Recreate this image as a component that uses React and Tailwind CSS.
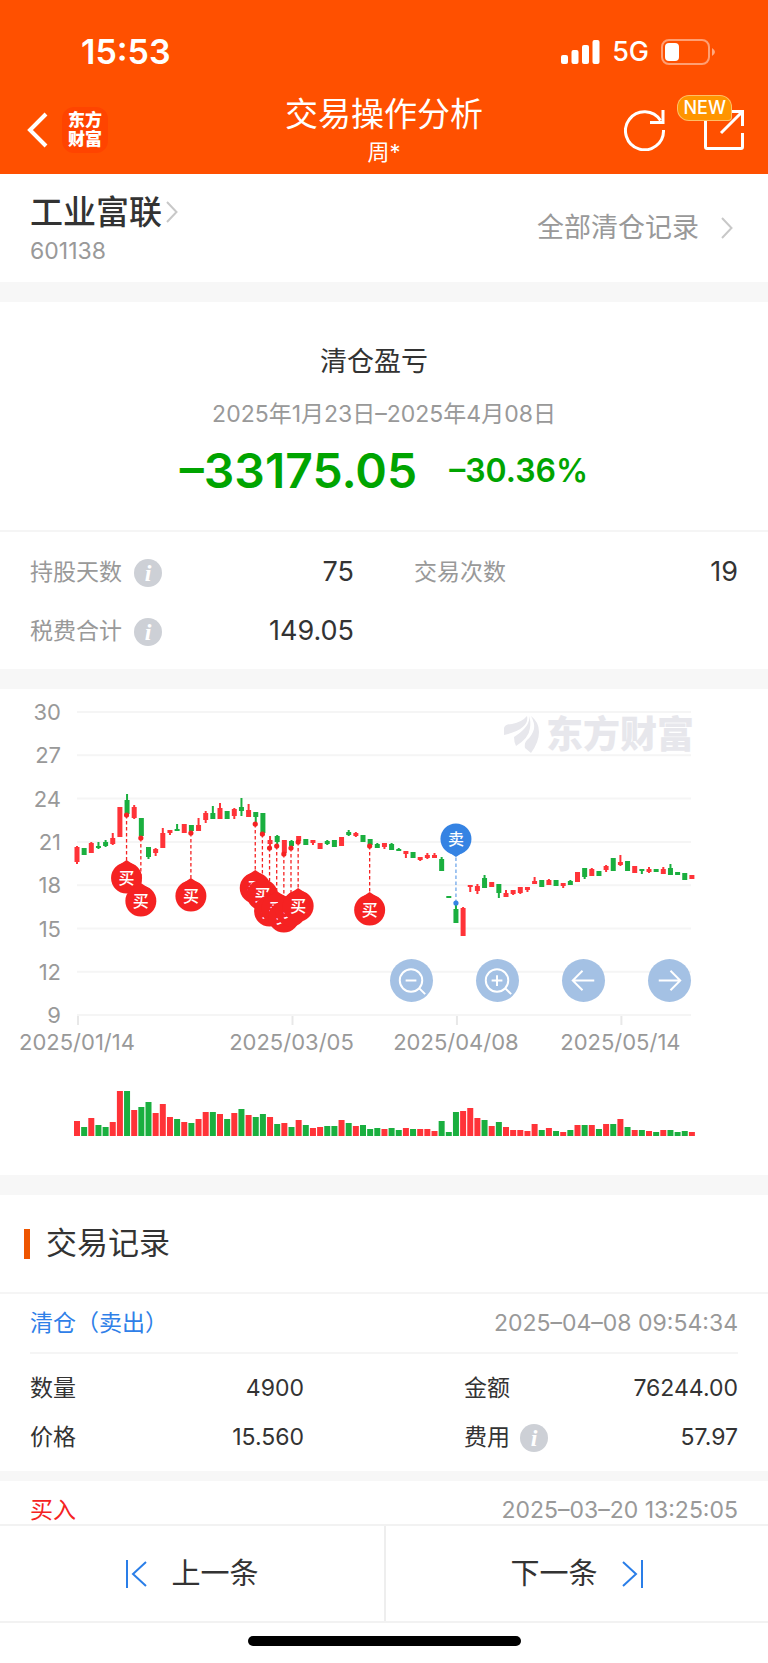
import clsx from 'clsx'

const RED = '#ff3338'
const GREEN = '#1aaf3f'

// first candle centre and the distance between two candles
const X0 = 77
const STEP = 7.15

// [rising, high, top, bottom, low, volume]
const candles = [
  [1, 157, 158, 173, 175, 15], [0, 159, 159, 166, 166, 9], [1, 153, 154, 164, 164, 18], [0, 153, 157, 159, 160, 11],
  [0, 151, 153, 157, 158, 9], [1, 144, 149, 155, 156, 14], [1, 118, 118, 148, 148, 45], [0, 105, 111, 125, 125, 45],
  [1, 116, 118, 129, 130, 26], [0, 129, 129, 147, 147, 29], [0, 158, 158, 168, 170, 34], [1, 159, 160, 164, 167, 23],
  [1, 139, 144, 159, 159, 32], [1, 141, 141, 144, 146, 19], [0, 135, 140, 142, 142, 17], [1, 135, 135, 144, 144, 14],
  [0, 136, 136, 142, 143, 13], [1, 129, 136, 142, 142, 17], [1, 122, 124, 131, 134, 24], [0, 117, 124, 130, 130, 24],
  [1, 114, 119, 130, 130, 22], [0, 122, 122, 130, 130, 17], [1, 119, 120, 127, 130, 23], [0, 109, 118, 122, 127, 27],
  [1, 115, 121, 128, 128, 21], [0, 123, 123, 128, 134, 19], [0, 124, 124, 144, 144, 22], [1, 147, 151, 155, 158, 19],
  [0, 146, 147, 153, 156, 12], [1, 151, 151, 164, 164, 13], [0, 151, 152, 157, 158, 9], [1, 147, 147, 152, 153, 16],
  [0, 150, 150, 156, 156, 11], [1, 151, 151, 154, 156, 8], [1, 154, 154, 160, 160, 9], [0, 151, 152, 155, 156, 10],
  [0, 151, 151, 158, 158, 10], [1, 148, 148, 157, 157, 16], [0, 141, 143, 146, 147, 13], [1, 143, 144, 147, 148, 10],
  [0, 146, 146, 153, 153, 11], [0, 150, 150, 156, 157, 7], [0, 154, 155, 159, 159, 8], [1, 154, 154, 158, 160, 7],
  [0, 154, 155, 161, 161, 8], [0, 159, 160, 162, 162, 6], [1, 162, 162, 165, 169, 8], [0, 163, 163, 169, 169, 7],
  [1, 168, 168, 171, 172, 7], [1, 164, 166, 169, 170, 7], [1, 164, 166, 169, 169, 5], [0, 168, 170, 182, 182, 15],
  [0, 207, 207, 209, 209, 4], [0, 214, 220, 234, 234, 24], [1, 218, 219, 247, 247, 25], [1, 196, 196, 198, 203, 28],
  [1, 195, 197, 202, 205, 18], [0, 186, 189, 199, 199, 16], [1, 193, 193, 198, 198, 10], [0, 195, 195, 204, 209, 14],
  [1, 201, 204, 208, 208, 9], [1, 201, 201, 205, 206, 6], [1, 198, 198, 204, 205, 6], [1, 198, 198, 201, 203, 5],
  [1, 188, 192, 195, 195, 12], [0, 191, 191, 198, 198, 6], [1, 190, 191, 196, 196, 8], [0, 191, 191, 197, 197, 5],
  [1, 194, 194, 197, 199, 4], [0, 191, 192, 196, 196, 6], [1, 183, 183, 193, 193, 11], [0, 179, 179, 188, 190, 11],
  [1, 179, 180, 187, 187, 11], [0, 182, 182, 187, 187, 7], [1, 176, 177, 181, 183, 12], [0, 169, 169, 182, 182, 12],
  [1, 166, 173, 176, 177, 17], [0, 172, 172, 182, 182, 9], [1, 177, 177, 184, 184, 6], [0, 180, 180, 182, 185, 6],
  [1, 178, 180, 183, 184, 5], [0, 180, 180, 183, 183, 4], [1, 178, 180, 185, 185, 6], [0, 175, 179, 186, 186, 6],
  [0, 183, 183, 186, 186, 4], [0, 184, 184, 191, 191, 5], [1, 186, 186, 190, 190, 4],
]

// [candle index, dot y, pin centre y]
const buys = [
  [7, 126, 189], [9, 149, 212], [16, 144, 207], [25, 135, 199], [26, 145, 206], [27, 159, 222],
  [28, 157, 220], [29, 165, 228], [30, 159, 222], [31, 153, 217], [41, 157, 221],
]

const levels = [30, 27, 24, 21, 18, 15, 12, 9]
const dates = [
  { at: 0, label: '2025/01/14' },
  { at: 30, label: '2025/03/05' },
  { at: 53, label: '2025/04/08' },
  { at: 76, label: '2025/05/14' },
]

const cx = (i) => X0 + i * STEP

function Pin({ x, y, dotY, sell }) {
  const color = sell ? '#3583e3' : '#f52222'
  return (
    <g>
      <path
        d={`M${x} ${dotY}V${y}`}
        stroke={color}
        strokeWidth="1.3"
        strokeDasharray="3.5 2.5"
        opacity={sell ? 0.7 : 1}
      />
      <circle cx={x} cy={dotY} r="2.6" fill={color} />
      <circle cx={x} cy={y} r="15.5" fill={color} />
      <path d={sell ? `M${x - 9} ${y + 12}L${x} ${y + 18}L${x + 9} ${y + 12}Z` : `M${x - 9} ${y - 12}L${x} ${y - 18}L${x + 9} ${y - 12}Z`} fill={color} />
      <text x={x} y={y + 6} fontSize="16" fontWeight="500" fill="#fff" textAnchor="middle">
        {sell ? '卖' : '买'}
      </text>
    </g>
  )
}

function PriceChart() {
  return (
    <svg viewBox="0 0 768 486" className="block w-full h-auto" role="img" aria-label="股价走势与买卖点">
      {levels.map((v, i) => {
        const y = 23 + i * 43.3
        return (
          <g key={v}>
            <path d={`M77 ${y}H691`} stroke="#f5f5f5" strokeWidth="2" />
            <text x="61" y={y + 8} fontSize="22" fill="#999" textAnchor="end">{v}</text>
          </g>
        )
      })}
      {dates.map((d) => (
        <g key={d.label}>
          <path d={`M${cx(d.at) + 1} 327v9`} stroke="#e8e8e8" strokeWidth="2" />
          <text x={cx(d.at)} y="361" fontSize="22" fill="#999" textAnchor="middle">{d.label}</text>
        </g>
      ))}

      <g fill="#e7e7ec">
        <path d="M504 46V39Q505 35 512 35Q522 33 527 27Q530 40 504 46Z" />
        <path d="M529 27Q531 37 514 48Q514 53 516 57Q529 49 530 39Q531 32 529 27Z" />
        <path d="M531 27Q535 34 534 40Q532 47 527 51Q524 54 525 59L531 64Q539 53 539 43Q539 33 531 27Z" />
        <text x="546" y="59" fontSize="37" fontWeight="900">东方财富</text>
      </g>

      {candles.map(([up, high, top, bottom, low, vol], i) => (
        <g key={i} fill={up ? RED : GREEN}>
          <rect x={cx(i) - 1} y={high} width="2" height={low - high} />
          <rect x={cx(i) - 2.5} y={top} width="5" height={bottom - top} />
          <rect x={cx(i) - 3} y={447 - vol} width="6" height={vol} />
        </g>
      ))}

      {buys.map(([i, dotY, y]) => (
        <Pin key={i} x={cx(i) - 0.5} y={y} dotY={dotY} />
      ))}
      <Pin x={cx(53)} y={150} dotY={214} sell />
    </svg>
  )
}

const chartTools = [
  { label: '缩小', path: 'M16 22h11M30 30l6 6', lens: true },
  { label: '放大', path: 'M16 22h11M21.5 16.500v11M30 30l6 6', lens: true },
  { label: '向左', path: 'M33 22H11M21 12L11 22l10 10' },
  { label: '向右', path: 'M11 22h22M23 12l10 10-10 10' },
]

function ChartTools() {
  return (
    <div className="absolute right-[10%] top-[270px] flex gap-[43px]">
      {chartTools.map((tool) => (
        <button key={tool.label} type="button" aria-label={tool.label} className="size-[43px] rounded-full bg-[#a4c1e4]">
          <svg viewBox="0 0 44 44" className="size-full" fill="none" stroke="#fff" strokeWidth="2">
            {tool.lens && <circle cx="21.5" cy="22" r="11.500" />}
            <path d={tool.path} />
          </svg>
        </button>
      ))}
    </div>
  )
}

function InfoButton({ label }) {
  return (
    <button
      type="button"
      aria-label={label}
      className="flex size-7 shrink-0 items-center justify-center rounded-full bg-[#cdd0d6] font-['Liberation_Serif',serif] text-[24px] leading-none font-bold text-white italic"
    >
      i
    </button>
  )
}

function Chevron({ className }) {
  return (
    <svg viewBox="0 0 12 22" className={clsx('h-[22px] w-3', className)} fill="none" stroke="#c8c8c8" strokeWidth="2">
      <path d="M1 1l9.500 10L1 21" />
    </svg>
  )
}

function StatusBar() {
  return (
    <div className="flex h-[88px] items-center justify-between pt-4 pr-[52px] pl-[81px]">
      <span className="text-[34px] leading-10 font-semibold">15:53</span>
      <div className="flex items-center gap-3">
        <svg viewBox="0 0 39 24" className="h-6 w-[39px]" fill="#fff">
          <rect x="0" y="15" width="7" height="9" rx="2" />
          <rect x="10.500" y="10" width="7" height="14" rx="2" />
          <rect x="21" y="5" width="7" height="19" rx="2" />
          <rect x="31.500" y="0" width="7" height="24" rx="2" />
        </svg>
        <span className="text-[27px] leading-8 font-medium">5G</span>
        <svg viewBox="0 0 55 26" className="h-[26px] w-[55px]" fill="none">
          <rect x="1" y="1" width="47" height="24" rx="7" stroke="#fff" strokeOpacity="0.45" strokeWidth="2" />
          <rect x="4" y="4" width="14" height="18" rx="4" fill="#fff" />
          <path d="M51 9q6 4 0 8z" fill="#fff" fillOpacity="0.5" />
        </svg>
      </div>
    </div>
  )
}

function Header() {
  return (
    <header className="bg-[#ff5000] pb-[2px] text-white">
      <StatusBar />
      <div className="grid h-[84px] grid-cols-[1fr_auto_1fr] items-center px-[23px]">
        <div className="flex items-center gap-[13px]">
          <button type="button" aria-label="返回">
            <svg viewBox="0 0 26 36" className="h-9 w-[26px]" fill="none" stroke="#fff" strokeWidth="4">
              <path d="M23 2L7 18l16 16" />
            </svg>
          </button>
          <div className="flex size-[46px] flex-col items-center justify-center rounded-xl bg-[#ff4400] text-[17px] leading-[19px] font-black">
            <span>东方</span>
            <span>财富</span>
          </div>
        </div>
        <div className="text-center">
          <h1 className="text-[33px] leading-[44px]">交易操作分析</h1>
          <p className="text-[22px] leading-8">周*</p>
        </div>
        <div className="flex items-center justify-end gap-[37px]">
          <button type="button" aria-label="刷新">
            <svg viewBox="0 0 42 42" className="size-[42px]" fill="none" stroke="#fff" strokeWidth="3">
              <path d="M39.500 21A19 19 0 1 1 36.500 11.500" />
              <path d="M39 1v12.500H26" />
            </svg>
          </button>
          <button type="button" aria-label="分享" className="relative">
            <svg viewBox="0 0 42 42" className="size-[42px]" fill="none" stroke="#fff" strokeWidth="3">
              <path d="M2.500 11v27q0 1.500 1.500 1.500h34q1.500 0 1.500-1.500V24" />
              <path d="M18 24L38 4M28 2.500h11.500V17" />
            </svg>
            <span className="absolute -top-[14px] right-[13px] rounded-[12px] rounded-br-[4px] border border-white/40 bg-[#ff9500] px-[5px] text-[18px] leading-[24px] font-medium">
              NEW
            </span>
          </button>
        </div>
      </div>
    </header>
  )
}

function Stat({ label, value, info }) {
  return (
    <div className="flex h-[59px] items-center justify-between">
      <dt className="flex items-center gap-3 text-[23px] text-[#999]">
        {label}
        {info && <InfoButton label={`${label}说明`} />}
      </dt>
      <dd className="text-[27px]">{value}</dd>
    </div>
  )
}

function Field({ label, value, info }) {
  return (
    <div className="flex h-[49px] items-center justify-between">
      <dt className="flex items-center gap-[10px]">
        {label}
        {info && <InfoButton label={`${label}说明`} />}
      </dt>
      <dd>{value}</dd>
    </div>
  )
}

function RecordHead({ type, time, color }) {
  return (
    <div className="mx-[30px] flex h-[60px] items-center justify-between border-b-2 border-[#f5f5f5] text-[23px]">
      <h3 className={color}>{type}</h3>
      <time className="text-[#999]">{time}</time>
    </div>
  )
}

export default function App() {
  return (
    <div className="flex min-h-screen flex-col bg-white font-[Inter,'Noto_Sans_CJK_SC',sans-serif] text-[#333]">
      <Header />

      <section className="flex h-[108px] items-center justify-between px-[30px]">
        <div className="pt-1">
          <a href="#stock" className="flex items-center gap-1">
            <h2 className="text-[33px] leading-[42px] font-medium">工业富联</h2>
            <Chevron />
          </a>
          <p className="text-[23px] leading-9 text-[#999]">601138</p>
        </div>
        <a href="#all" className="flex items-center gap-[22px] pr-[5px] text-[27px] text-[#999]">
          全部清仓记录
          <Chevron />
        </a>
      </section>

      <section className="border-t-20 border-[#f7f7f7] pt-10 text-center">
        <h2 className="pr-5 text-[27px] leading-10">清仓盈亏</h2>
        <p className="mt-[14px] text-[23px] leading-9 text-[#999]">2025年1月23日–2025年4月08日</p>
        <div className="mt-1 flex h-[94px] items-start justify-center gap-8 text-[#00a400]">
          <strong className="text-[48px] leading-[70px] font-semibold">–33175.05</strong>
          <strong className="text-[32px] leading-[70px] font-semibold">–30.36%</strong>
        </div>
      </section>

      <dl className="grid grid-cols-2 gap-x-[60px] border-t-2 border-[#f5f5f5] px-[30px] pt-[11px] pb-2">
        <Stat label="持股天数" value="75" info />
        <Stat label="交易次数" value="19" />
        <Stat label="税费合计" value="149.05" info />
      </dl>

      <section className="relative border-t-20 border-[#f7f7f7]">
        <PriceChart />
        <ChartTools />
      </section>

      <section className="border-t-20 border-[#f7f7f7]">
        <div className="flex h-[99px] items-center gap-4 border-b-2 border-[#f5f5f5] pl-6">
          <span className="h-[30px] w-[6px] bg-[#ee5500]" />
          <h2 className="text-[31px]">交易记录</h2>
        </div>
        <article>
          <RecordHead type="清仓（卖出）" time="2025–04–08 09:54:34" color="text-[#2f80e8]" />
          <dl className="grid grid-cols-2 gap-x-[160px] px-[30px] pt-[10px] pb-[9px] text-[23px]">
            <Field label="数量" value="4900" />
            <Field label="金额" value="76244.00" />
            <Field label="价格" value="15.560" />
            <Field label="费用" value="57.97" info />
          </dl>
        </article>
        <article className="border-t-10 border-[#f7f7f7]">
          <RecordHead type="买入" time="2025–03–20 13:25:05" color="text-[#f52222]" />
        </article>
      </section>

      <footer className="fixed inset-x-0 bottom-0 bg-white">
        <nav className="grid h-[99px] grid-cols-2 border-y-2 border-[#f2f2f2] text-[29px]">
          <button type="button" className="flex items-center justify-center gap-6">
            <svg viewBox="0 0 22 28" className="h-7 w-[22px]" fill="none" stroke="#2a7ee8" strokeWidth="2">
              <path d="M2 0v28M21 2L8 14l13 12" />
            </svg>
            上一条
          </button>
          <button type="button" className="flex items-center justify-center gap-6 border-l-2 border-[#eee]">
            下一条
            <svg viewBox="0 0 22 28" className="h-7 w-[22px]" fill="none" stroke="#2a7ee8" strokeWidth="2">
              <path d="M20 0v28M1 2l13 12L1 26" />
            </svg>
          </button>
        </nav>
        <div className="flex h-10 justify-center pt-[13px]">
          <div className="h-[10px] w-[273px] rounded-full bg-black" />
        </div>
      </footer>
    </div>
  )
}
